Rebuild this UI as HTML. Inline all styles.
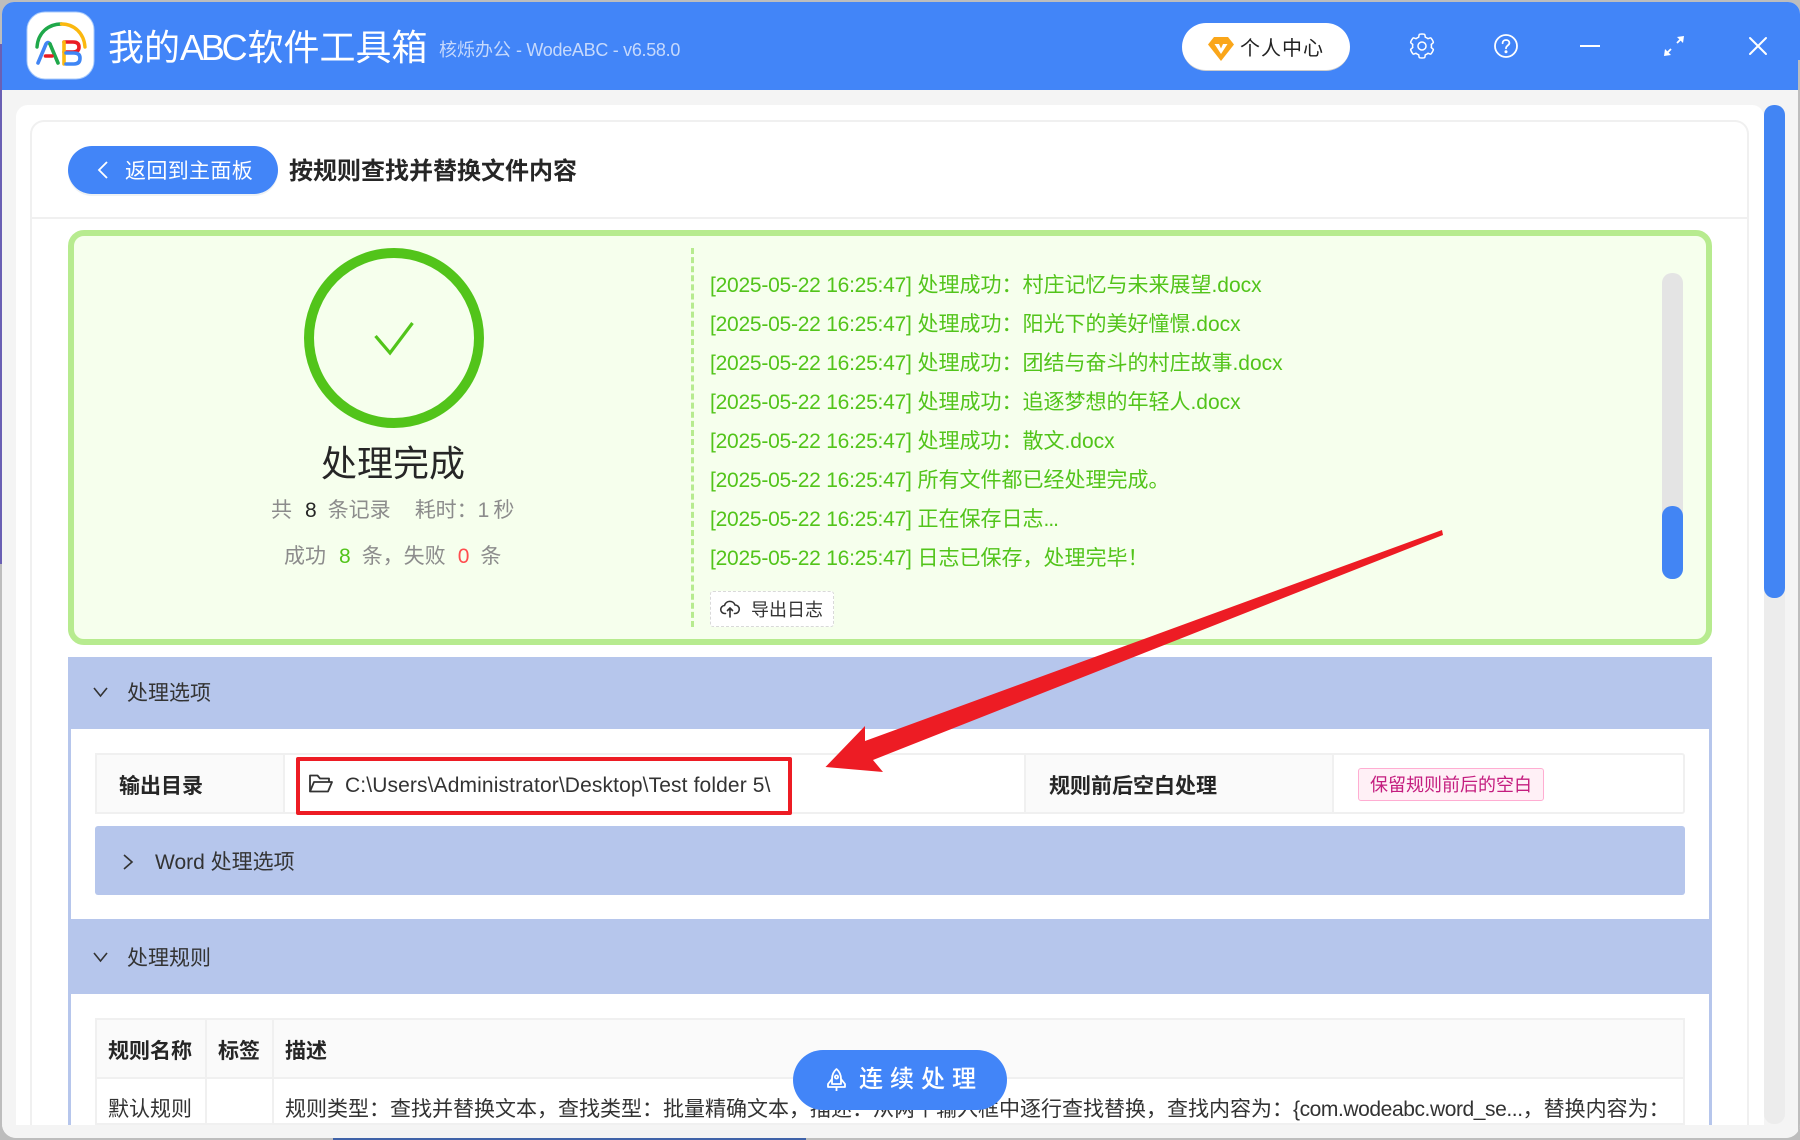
<!DOCTYPE html>
<html lang="zh"><head><meta charset="utf-8"><title>我的ABC软件工具箱</title>
<style>
*{box-sizing:border-box;margin:0;padding:0}
html,body{width:1800px;height:1140px;overflow:hidden;background:#bdbdbd;font-family:"Liberation Sans","Noto Sans CJK SC",sans-serif}
.a{position:absolute}
.t{position:absolute;white-space:nowrap;line-height:40px;height:40px}
.log{left:710px;font-size:21px;color:#52c41a}
.log i{font-style:normal;letter-spacing:-.24px}
.b{font-weight:700;color:#262626;font-size:21px}
.d{color:#333;font-size:21px}
svg{position:absolute;overflow:visible}
</style></head><body>
<div class="a" style="left:0;top:44px;width:3px;height:520px;background:#6a60b4"></div>
<div class="a" style="left:333px;top:1137px;width:473px;height:3px;background:#3f62a8"></div>
<div class="a" id="win" style="left:2px;top:2px;width:1798px;height:1136px;border-radius:12px 12px 14px 14px;background:#f4f4f4;overflow:hidden">
<div style="position:absolute;left:-2px;top:-2px;width:1800px;height:1138px;overflow:hidden">
<div class="a" style="left:0;top:0;width:1800px;height:90px;background:#4285f8"></div>
<div class="a" style="left:1798px;top:60px;width:2px;height:1078px;background:#bdbdbd"></div>
<svg style="left:0;top:0" width="120" height="90" viewBox="0 0 120 90" fill="none" stroke-linecap="round">
<rect x="27" y="12" width="67" height="67" rx="18" fill="#fff" stroke="#a9cbfb" stroke-width="1"/>
<path d="M37 47C38 33 48 24 61.5 24" stroke="#1fa84a" stroke-width="3.4"/>
<path d="M61.5 24C74 24 84 33 85 47" stroke="#fbb80f" stroke-width="3.4"/>
<path d="M38 63L46 44Q48 41 50 44" stroke="#4285f4" stroke-width="3.6"/>
<path d="M50 44L58 63" stroke="#1fa84a" stroke-width="3.6"/>
<path d="M45.5 56H52" stroke="#ea1c24" stroke-width="3.6"/>
<path d="M64 42H73Q79 42 79 47Q79 52 73 52H64" stroke="#ea1c24" stroke-width="3.6"/>
<path d="M64 42V64" stroke="#fbb80f" stroke-width="3.6"/>
<path d="M66 53H74Q80 53 80 58Q80 64 74 64H66" stroke="#3f86f5" stroke-width="3.6"/>
</svg>
<div class="t" style="left:108px;top:25px;font-size:36px;color:#fff;line-height:46px;height:46px">我的<span style="letter-spacing:-3.2px">ABC</span><span style="margin-left:3px">软件工具箱</span></div>
<div class="t" style="left:439px;top:30px;font-size:18px;color:#c6d9fc">核烁办公 <span style="letter-spacing:-.3px">- WodeABC - v6.58.0</span></div>
<div class="a" style="left:1182px;top:23px;width:168px;height:48px;border-radius:24px;background:#fff;border-bottom:1px solid #ccc"></div>
<svg style="left:1208px;top:36px" width="26" height="25" viewBox="0 0 26 25"><path d="M6 1H20L26 8.5L13 25L0 8.5Z" fill="#faa61a"/><path d="M6.5 8H11L13 12.5L15 8H19.5L13 18Z" fill="#fff"/></svg>
<div class="t" style="left:1240px;top:29px;font-size:20px;color:#222;letter-spacing:1px">个人中心</div>
<svg style="left:1410px;top:34px" width="24" height="24" viewBox="64 64 896 896" fill="none" stroke="#fff" stroke-width="56"><path d="M924.8 625.7l-65.5-56c3.1-19 4.7-38.4 4.7-57.8s-1.6-38.8-4.7-57.8l65.5-56a32.03 32.03 0 0 0 9.3-35.2l-.9-2.6a443.74 443.74 0 0 0-79.7-137.9l-1.8-2.1a32.12 32.12 0 0 0-35.1-9.5l-81.3 28.9c-30-24.6-63.5-44-99.7-57.6l-15.7-85a32.05 32.05 0 0 0-25.8-25.7l-2.7-.5c-52.1-9.4-106.9-9.4-159 0l-2.7.5a32.05 32.05 0 0 0-25.8 25.7l-15.8 85.4a351.86 351.86 0 0 0-99 57.4l-81.9-29.1a32 32 0 0 0-35.1 9.5l-1.8 2.1a446.02 446.02 0 0 0-79.7 137.9l-.9 2.6c-4.5 12.5-.8 26.5 9.3 35.2l66.3 56.6c-3.1 18.8-4.6 38-4.6 57.1 0 19.2 1.5 38.4 4.6 57.1L99 625.5a32.03 32.03 0 0 0-9.3 35.2l.9 2.6c18.1 50.4 44.9 96.9 79.7 137.9l1.8 2.1a32.12 32.12 0 0 0 35.1 9.5l81.9-29.1c29.8 24.5 63.1 43.9 99 57.4l15.8 85.4a32.05 32.05 0 0 0 25.8 25.7l2.7.5a449.4 449.4 0 0 0 159 0l2.7-.5a32.05 32.05 0 0 0 25.8-25.7l15.7-85a350 350 0 0 0 99.7-57.6l81.3 28.9a32 32 0 0 0 35.1-9.5l1.8-2.1c34.8-41.1 61.6-87.5 79.7-137.9l.9-2.6c4.5-12.3.8-26.3-9.3-35z"/><circle cx="512" cy="512" r="150"/></svg>
<svg style="left:1494px;top:34px" width="24" height="24" viewBox="0 0 24 24" fill="none" stroke="#fff" stroke-width="1.8" stroke-linecap="round"><circle cx="12" cy="12" r="11"/><path d="M8.6 9.2C8.6 7 10.2 6 12 6C14 6 15.4 7.3 15.4 9C15.4 11.4 12 11.6 12 14.4"/><circle cx="12" cy="17.7" r=".6" fill="#fff"/></svg>
<div class="a" style="left:1580px;top:45px;width:20px;height:2.4px;background:#fff"></div>
<svg style="left:1663px;top:35px" width="22" height="22" viewBox="0 0 22 22" fill="#fff" stroke="#fff" stroke-width="1.8"><path d="M3 19L8 14M14 8L19 3" fill="none"/><path d="M1 21L2 14L8 20Z" stroke="none"/><path d="M21 1L20 8L14 2Z" stroke="none"/></svg>
<svg style="left:1749px;top:37px" width="18" height="18" viewBox="0 0 18 18" stroke="#fff" stroke-width="2" stroke-linecap="round"><path d="M1 1L17 17M17 1L1 17"/></svg>

<div class="a" style="left:16px;top:105px;width:1748px;height:1020px;background:#fff;border-radius:12px 12px 0 0;overflow:hidden">
<div class="a" style="left:14px;top:15px;width:1719px;height:1005px;border:2px solid #f0f0f0;border-bottom:0;border-radius:14px 14px 0 0"></div>
<div class="a" style="left:14px;top:112px;width:1719px;height:2px;background:#f0f0f0"></div>
</div>
<div class="a" style="left:1764px;top:105px;width:21px;height:1019px;background:#ececec;border-radius:10px"></div>
<div class="a" style="left:1764px;top:105px;width:21px;height:493px;background:#4285f4;border-radius:10px"></div>

<div class="a" style="left:68px;top:146px;width:210px;height:48px;border-radius:24px;background:#4285f8;box-shadow:0 2px 0 #eef2f4"></div>
<svg style="left:96px;top:160px" width="14" height="20" viewBox="0 0 14 20" fill="none" stroke="#fff" stroke-width="1.8"><path d="M11 2L3 10L11 18"/></svg>
<div class="t" style="left:125px;top:152px;font-size:21px;letter-spacing:.35px;color:#fff">返回到主面板</div>
<div class="t" style="left:289px;top:152px;font-size:24px;font-weight:700;color:#262626">按规则查找并替换文件内容</div>

<div class="a" style="left:68px;top:230px;width:1644px;height:415px;background:#f6ffed;border:6px solid #b7eb8f;border-radius:16px"></div>
<svg style="left:304px;top:248px" width="180" height="180" viewBox="0 0 180 180" fill="none" stroke="#52c41a"><circle cx="90" cy="90" r="85" stroke-width="10"/><path d="M71.5 88L86 105L108.500 75" stroke-width="3.200"/></svg>
<div class="t" style="left:319px;top:444px;font-size:36px;color:#262626;width:148px;text-align:center">处理完成</div>
<div class="t" style="left:271px;top:491px;font-size:21px;color:#8c8c8c">共<span style="color:#262626;margin:0 11px 0 13px">8</span>条记录<span style="margin-left:24px">耗时：1</span><span style="margin-left:4px">秒</span></div>
<div class="t" style="left:284px;top:537px;font-size:21px;color:#8c8c8c">成功<span style="color:#52c41a;margin:0 11px 0 13px">8</span>条，失败<span style="color:#ff4d4f;margin:0 11px 0 12px">0</span>条</div>
<div class="a" style="left:691px;top:248px;height:379px;width:0;border-left:3px dashed #b7eb8f"></div>
<div class="t log" style="top:266px"><i>[2025-05-22 16:25:47]</i> 处理成功：村庄记忆与未来展望.docx</div>
<div class="t log" style="top:305px"><i>[2025-05-22 16:25:47]</i> 处理成功：阳光下的美好憧憬.docx</div>
<div class="t log" style="top:344px"><i>[2025-05-22 16:25:47]</i> 处理成功：团结与奋斗的村庄故事.docx</div>
<div class="t log" style="top:383px"><i>[2025-05-22 16:25:47]</i> 处理成功：追逐梦想的年轻人.docx</div>
<div class="t log" style="top:422px"><i>[2025-05-22 16:25:47]</i> 处理成功：散文.docx</div>
<div class="t log" style="top:461px"><i>[2025-05-22 16:25:47]</i> 所有文件都已经处理完成<span style="letter-spacing:-2px">。</span></div>
<div class="t log" style="top:500px"><i>[2025-05-22 16:25:47]</i> 正在保存日志<span style="letter-spacing:-1px">...</span></div>
<div class="t log" style="top:539px"><i>[2025-05-22 16:25:47]</i> 日志已保存，处理完毕！</div>
<div class="a" style="left:1662px;top:273px;width:21px;height:306px;background:#e4e4e4;border-radius:10px"></div>
<div class="a" style="left:1662px;top:506px;width:21px;height:73px;background:#4285f4;border-radius:10px"></div>
<div class="a" style="left:710px;top:591px;width:124px;height:36px;background:#fff;border:1px dashed #d9d9d9;border-radius:3px"></div>
<svg style="left:720px;top:600px" width="20" height="18" viewBox="0 0 20 18" fill="none" stroke="#333" stroke-width="1.600" stroke-linecap="round"><path d="M5.500 13.500H5A4 4 0 0 1 4.500 5.500A5.500 5.500 0 0 1 15 5A4.200 4.200 0 0 1 15 13.500H14.500"/><path d="M10 17V8M7.500 10.500L10 8L12.500 10.500"/></svg>
<div class="t" style="left:751px;top:590px;font-size:18px;color:#333">导出日志</div>

<div class="a" style="left:68px;top:657px;width:1644px;height:468px;background:#fff;border-left:3px solid #b6c6ec;border-right:3px solid #b6c6ec"></div>
<div class="a" style="left:68px;top:657px;width:1644px;height:72px;background:#b6c6ec"></div>
<svg style="left:93px;top:686px" width="15" height="12" viewBox="0 0 15 12" fill="none" stroke="#333" stroke-width="1.600"><path d="M1 2L7.500 10L14 2"/></svg>
<div class="t" style="left:127px;top:674px;font-size:21px;color:#333">处理选项</div>

<div class="a" style="left:95px;top:753px;width:1590px;height:61px;border:2px solid #f0f0f0;border-radius:3px"></div>
<div class="a" style="left:95px;top:753px;width:190px;height:61px;background:#fafafa;border:2px solid #f0f0f0"></div>
<div class="a" style="left:1024px;top:753px;width:310px;height:61px;background:#fafafa;border:2px solid #f0f0f0"></div>
<div class="t b" style="left:119px;top:767px">输出目录</div>
<div class="t b" style="left:1049px;top:767px">规则前后空白处理</div>
<div class="a" style="left:1358px;top:768px;width:186px;height:33px;background:#fff0f6;border:1px solid #ffadd2;border-radius:3px"></div>
<div class="t" style="left:1370px;top:765px;font-size:18px;color:#c41d7f">保留规则前后的空白</div>
<svg style="left:309px;top:774px" width="24" height="19" viewBox="0 0 24 19" fill="none" stroke="#333" stroke-width="1.800" stroke-linejoin="round"><path d="M1 17.500V1.500H8.500L11 4.500H20V8"/><path d="M1 17.500L5 8H23L19 17.500Z"/></svg>
<div class="t" style="left:345px;top:766px;font-size:21px;letter-spacing:.12px;color:#333">C:\Users\Administrator\Desktop\Test folder 5\</div>

<div class="a" style="left:95px;top:826px;width:1590px;height:69px;background:#b6c6ec;border-radius:3px"></div>
<svg style="left:122px;top:854px" width="12" height="16" viewBox="0 0 12 16" fill="none" stroke="#333" stroke-width="1.600"><path d="M2 1L10 8L2 15"/></svg>
<div class="t" style="left:155px;top:843px;font-size:21px;color:#333">Word 处理选项</div>

<div class="a" style="left:68px;top:919px;width:1644px;height:75px;background:#b6c6ec"></div>
<svg style="left:93px;top:951px" width="15" height="12" viewBox="0 0 15 12" fill="none" stroke="#333" stroke-width="1.600"><path d="M1 2L7.500 10L14 2"/></svg>
<div class="t" style="left:127px;top:939px;font-size:21px;color:#333">处理规则</div>

<div class="a" style="left:95px;top:1018px;width:1590px;height:107px;border:2px solid #f0f0f0"></div>
<div class="a" style="left:95px;top:1018px;width:1590px;height:61px;background:#fafafa;border:2px solid #f0f0f0"></div>
<div class="a" style="left:205px;top:1018px;width:2px;height:107px;background:#f0f0f0"></div>
<div class="a" style="left:272px;top:1018px;width:2px;height:107px;background:#f0f0f0"></div>
<div class="t b" style="left:108px;top:1032px">规则名称</div>
<div class="t b" style="left:218px;top:1032px">标签</div>
<div class="t b" style="left:285px;top:1032px">描述</div>
<div class="t d" style="left:108px;top:1085px;height:40px;overflow:hidden;padding-top:5px;line-height:40px">默认规则</div>
<div class="t d" style="left:285px;top:1085px;height:40px;overflow:hidden;padding-top:5px;line-height:40px">规则类型：查找并替换文本，查找类型：批量精确文本，描述：从两个输入框中逐行查找替换，查找内容为：<span style="letter-spacing:-.42px">{com.wodeabc.word_se...</span>，替换内容为：</div>

<div class="a" style="left:0;top:1125px;width:1798px;height:13px;background:#f4f4f4"></div>
<div class="a" style="left:793px;top:1050px;width:214px;height:60px;border-radius:30px;background:#4285f8"></div>
<svg style="left:826px;top:1068px" width="21" height="24" viewBox="0 0 21 24" fill="none" stroke="#fff" stroke-width="1.800" stroke-linejoin="round"><path d="M10.500 1C14 4 15 8 15 11V16H6V11C6 8 7 4 10.500 1Z"/><path d="M6 11L2 16V19H19V16L15 11"/><path d="M10.500 19V23"/><circle cx="10.500" cy="9" r="1.600"/></svg>
<div class="t" style="left:859px;top:1060px;font-size:24px;color:#fff;letter-spacing:7px;font-weight:500">连续处理</div>

<svg style="left:0;top:0" width="1800" height="1138" viewBox="0 0 1800 1138"><path d="M825.500 767L865 726L865 741L1442 530L1443 535L873 760L883 772Z" fill="#ed1c24"/></svg>
<div class="a" style="left:296px;top:757px;width:496px;height:58px;border:4px solid #ed1c24;border-radius:2px"></div>
</div></div>
</body></html>
